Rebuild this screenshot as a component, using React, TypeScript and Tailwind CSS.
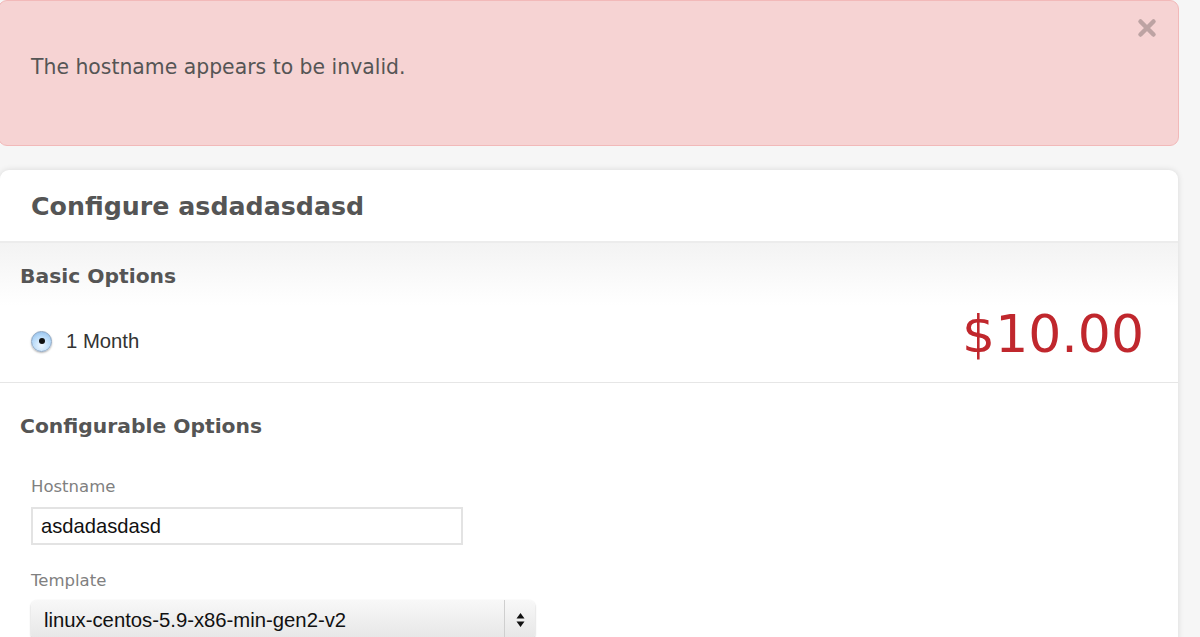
import React from 'react';

const VERDANA = "font-['DejaVu_Sans',Verdana,sans-serif]";
const HELV = "font-['Liberation_Sans',Arial,sans-serif]";

const Alert: React.FC = () => (
    <div className="relative h-[146px] w-[1181px] -ml-[2px] rounded-[9px] border border-[#f2b9b9] bg-[#f6d3d3] px-[32px] pt-[52px]">
        <p className={`${VERDANA} text-[20.4px] leading-[28px] text-[#555555]`}>The hostname appears to be invalid.</p>
        {/* close button */}
        <span className="absolute right-[21px] top-[17px] text-[#bda3a3]">
            <svg width="20" height="20" viewBox="0 0 20 20">
                <path d="M3.5 3.5 L16.5 16.5 M16.5 3.5 L3.5 16.5" stroke="currentColor" strokeWidth="4.5" strokeLinecap="round" />
            </svg>
        </span>
    </div>
);

const Radio: React.FC = () => (
    <span className="flex h-[21px] w-[21px] shrink-0 items-center justify-center rounded-full border border-[#8da6c2] bg-[radial-gradient(circle_at_50%_70%,#eef7ff_0%,#b9dbf9_55%,#86b6e6_100%)] shadow-[0_1px_2px_rgba(0,0,0,0.3)]">
        <span className="h-[6px] w-[6px] rounded-full bg-[#111]" />
    </span>
);

export default function App() {
    return (
        <div className="min-h-[637px] w-[1200px] overflow-hidden bg-[#f6f6f6]">
            <Alert />

            <div className="mt-[24px] w-[1178px] rounded-t-[9px] bg-white shadow-[0_0_6px_rgba(0,0,0,0.12)]">
                {/* header */}
                <div className="flex h-[73px] items-center border-b-2 border-[#ececec] px-[31px] pt-[2px]">
                    <h1 className={`${VERDANA} text-[25.3px] font-bold text-[#555555]`}>Configure asdadasdasd</h1>
                </div>

                {/* basic options */}
                <div className="border-b border-[#e6e6e6] bg-gradient-to-b from-[#f3f3f3] to-white to-[45%] px-[20px] pb-[18px] pt-[19px]">
                    <h2 className={`${VERDANA} text-[20.3px] font-bold leading-[28px] text-[#555555]`}>Basic Options</h2>
                    <div className="mt-[14px] flex items-center justify-between pl-[11px] pr-[14px]">
                        <label className="flex items-center gap-[14px] pt-[14px]">
                            <Radio />
                            <span className={`${HELV} text-[20.3px] text-[#333333]`}>1 Month</span>
                        </label>
                        <span className={`${VERDANA} text-[52px] leading-[60px] text-[#c0272d]`}>$10.00</span>
                    </div>
                </div>

                {/* configurable options */}
                <div className="px-[20px] pt-[29px] pb-[10px]">
                    <h2 className={`${VERDANA} text-[20.3px] font-bold leading-[28px] text-[#555555]`}>Configurable Options</h2>
                    <div className="mt-[35px] pl-[11px]">
                        <div className={`${VERDANA} text-[16.5px] leading-[24px] text-[#808080]`}>Hostname</div>
                        <div className={`${HELV} mt-[8px] flex h-[38px] w-[432px] items-center border-2 border-[#e3e3e3] px-[8px] text-[20.2px] text-[#111]`}>
                            asdadasdasd
                        </div>
                        <div className={`${VERDANA} mt-[24px] text-[16.5px] leading-[24px] text-[#808080]`}>Template</div>
                        <div className="mt-[7px] flex h-[40px] w-[504px] items-center rounded-[6px] bg-gradient-to-b from-[#f8f8f8] to-[#e6e6e6] shadow-[0_1px_2px_rgba(0,0,0,0.3)]">
                            <span className={`${HELV} flex-1 px-[13px] text-[20.3px] text-[#111]`}>linux-centos-5.9-x86-min-gen2-v2</span>
                            <span className="flex h-full w-[31px] items-center justify-center border-l border-[#cfcfcf]">
                                <svg width="9" height="16" viewBox="0 0 9 16">
                                    <path d="M4.5 1 L8.5 6.5 L0.5 6.5 Z M4.5 15 L8.5 9.5 L0.5 9.5 Z" fill="#111" />
                                </svg>
                            </span>
                        </div>
                    </div>
                </div>
            </div>
        </div>
    );
}
